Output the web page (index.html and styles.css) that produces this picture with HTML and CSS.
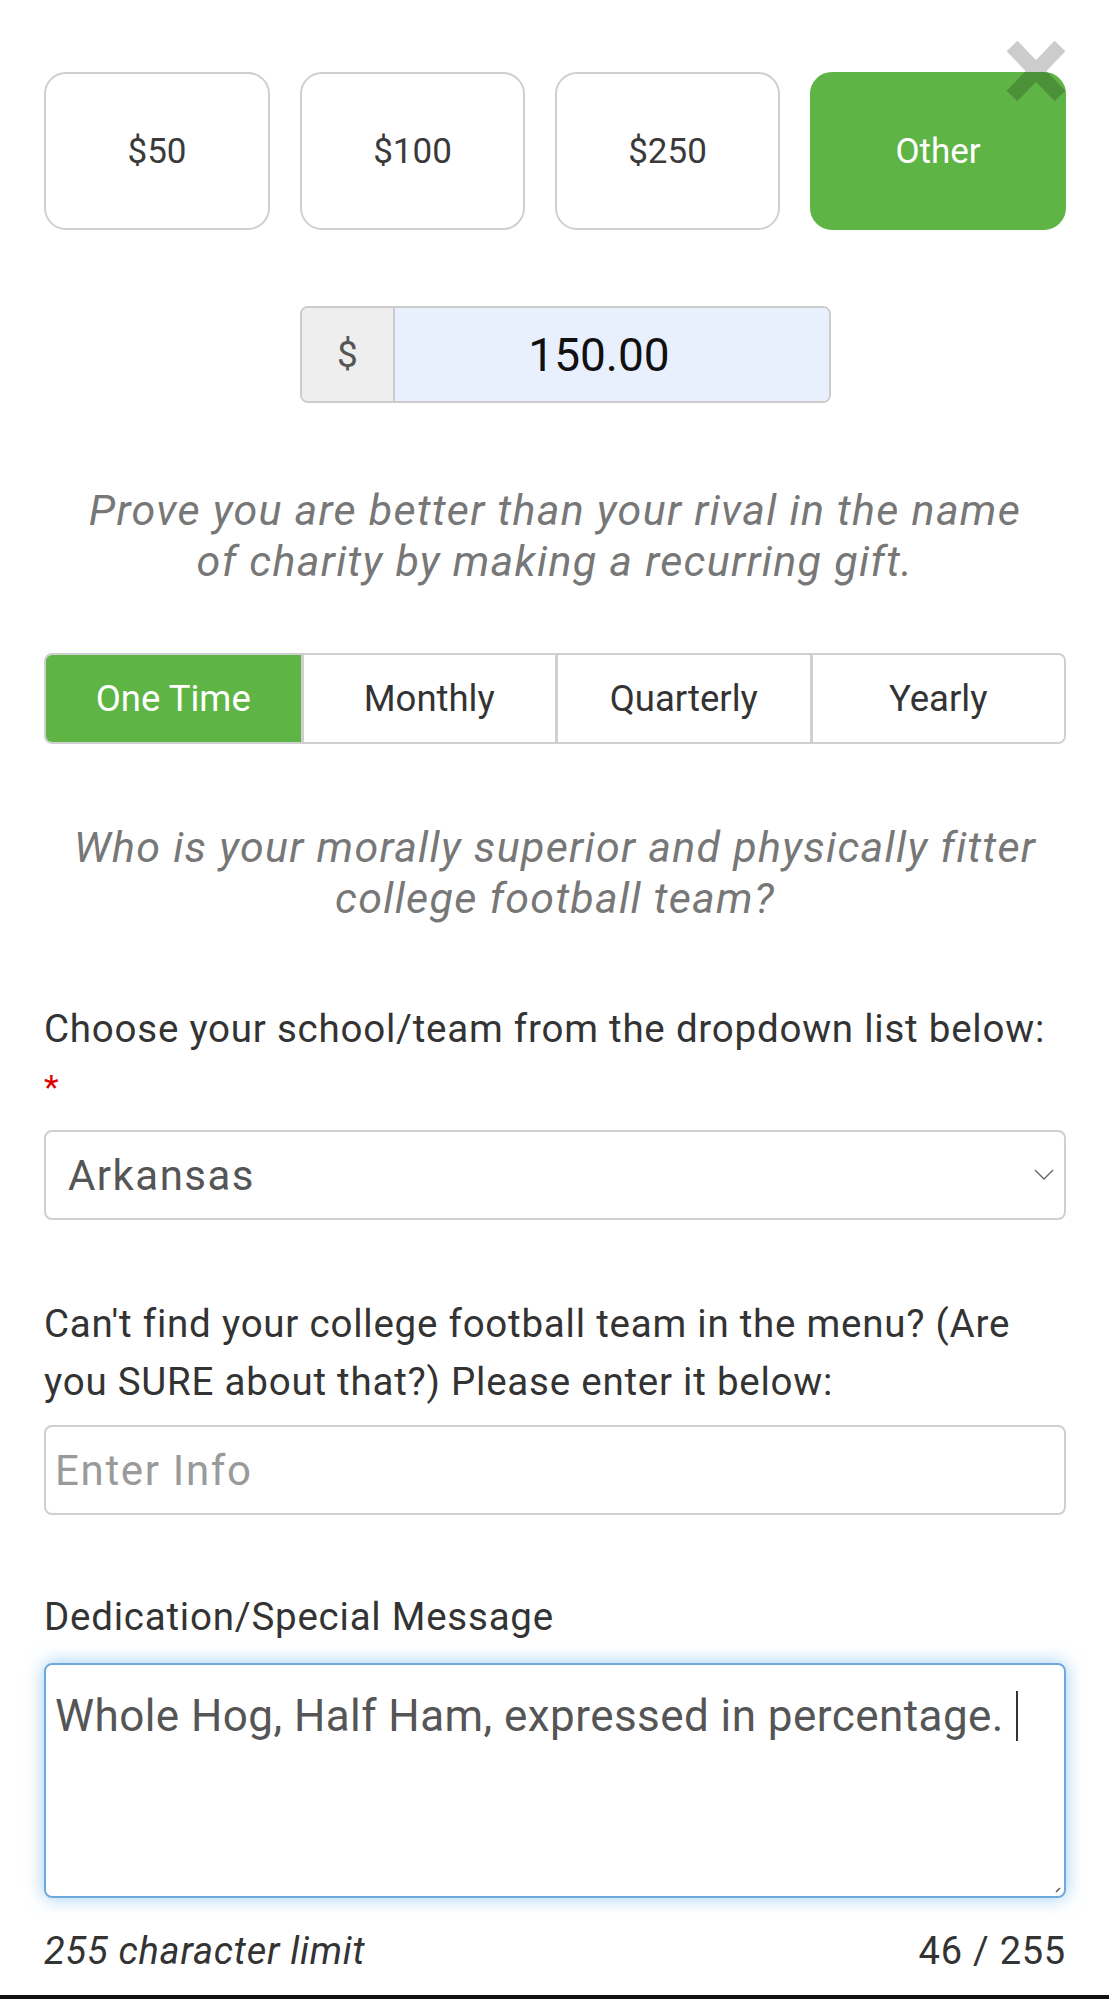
FILE: index.html
```html
<!DOCTYPE html>
<html lang="en">
<head>
<meta charset="utf-8">
<title>Donation form</title>
<link rel="stylesheet" href="styles.css">
</head>
<body>
<div class="page">
  <div class="form">
    <div class="amounts">
      <button class="amt">$50</button>
      <button class="amt">$100</button>
      <button class="amt">$250</button>
      <button class="amt amt-on">Other
        <svg class="close" viewBox="0 0 60 62" width="60" height="62"><path d="M6 6 L54 56 M54 6 L6 56" stroke="rgba(0,0,0,0.2)" stroke-width="15" fill="none"/></svg>
      </button>
    </div>

    <div class="money">
      <span class="addon">$</span>
      <span class="money-input">150.00</span>
    </div>

    <p class="pitch">Prove you are better than your rival in the name<br>of charity by making a recurring gift.</p>

    <div class="freq">
      <button class="fq fq-on">One Time</button>
      <button class="fq">Monthly</button>
      <button class="fq">Quarterly</button>
      <button class="fq">Yearly</button>
    </div>

    <p class="pitch pitch2">Who is your morally superior and physically fitter<br>college football team?</p>

    <label class="lbl">Choose your school/team from the dropdown list below: <span class="req">*</span></label>
    <div class="select">
      <span>Arkansas</span>
      <svg class="chev" viewBox="0 0 20 12" width="20" height="12"><path d="M1 1 L10 10 L19 1" stroke="#666" stroke-width="1.4" fill="none"/></svg>
    </div>

    <label class="lbl lbl2">Can't find your college football team in the menu? (Are<br>you SURE about that?) Please enter it below:</label>
    <div class="text-input placeholder">Enter Info</div>

    <label class="lbl lbl3">Dedication/Special Message</label>
    <div class="textarea">
      <span>Whole Hog, Half Ham, expressed in percentage.</span><span class="caret"></span>
      <svg class="grip" viewBox="0 0 6 6" width="6" height="6"><path d="M5 1 L1 5" stroke="#555" stroke-width="1.5"/></svg>
    </div>

    <div class="counter">
      <span class="limit">255 character limit</span>
      <span>46 / 255</span>
    </div>
  </div>
  <div class="bottombar"></div>
</div>
</body>
</html>
```

FILE: styles.css
```css
* { box-sizing: border-box; }
html, body { margin: 0; padding: 0; background: #fff; }
body { font-family: "Roboto", "Liberation Sans", sans-serif; color: #333; }
.page {
  min-height: 1999px;
  display: flex;
  flex-direction: column;
}
.form {
  padding: 72px 43px 0 44px;
  display: flex;
  flex-direction: column;
}
button { font-family: inherit; cursor: pointer; }

.amounts {
  display: grid;
  grid-template-columns: 226px 225px 225px 1fr;
  gap: 30px;
}
.amt {
  position: relative;
  height: 158px;
  border: 2px solid #cfcfcf;
  border-radius: 22px;
  background: #fff;
  font-size: 35px;
  color: #3a3a3a;
  padding: 0;
}
.amt-on {
  background: #5fb446;
  border-color: #5fb446;
  color: #fff;
}
.close {
  position: absolute;
  top: -34px;
  right: -2px;
}

.money {
  margin-top: 76px;
  margin-left: 256px;
  width: 531px;
  height: 97px;
  display: flex;
  border: 2px solid #cccccc;
  border-radius: 8px;
  overflow: hidden;
}
.addon {
  width: 93px;
  background: #eeeeee;
  border-right: 2px solid #cccccc;
  display: flex;
  align-items: center;
  justify-content: center;
  font-size: 37px;
  color: #555;
}
.money-input {
  flex: 1;
  background: #e8f0fe;
  display: flex;
  align-items: center;
  justify-content: center;
  padding-right: 26px;
  font-size: 46px;
  color: #111;
}

.pitch {
  margin: 82px 0 0;
  text-align: center;
  font-style: italic;
  font-size: 43px;
  letter-spacing: 0.03em;
  line-height: 51px;
  color: #777;
}
.pitch2 { margin-top: 78px; }

.freq {
  margin-top: 66px;
  display: grid;
  grid-template-columns: repeat(4, 1fr);
  height: 91px;
  border: 2px solid #cfcfcf;
  border-radius: 8px;
  overflow: hidden;
}
.fq {
  border: 0;
  border-left: 3px solid #cfcfcf;
  background: #fff;
  font-size: 36.5px;
  color: #333;
  padding: 0;
}
.fq:first-child { border-left: 0; }
.fq-on {
  background: #5fb446;
  color: #fff;
}

.lbl {
  display: block;
  margin-top: 76px;
  font-size: 38.5px;
  letter-spacing: 0.02em;
  line-height: 58px;
  color: #333;
}
.req { display: block; color: #e00000; font-size: 34px; }
.lbl2 { margin-top: 75px; }
.lbl3 { margin-top: 73px; }

.select {
  margin-top: 14px;
  height: 90px;
  border: 2px solid #cfcfcf;
  border-radius: 8px;
  display: flex;
  align-items: center;
  justify-content: space-between;
  padding: 0 10px 0 22px;
  font-size: 42px;
  letter-spacing: 0.035em;
  color: #555;
}

.text-input {
  margin-top: 14px;
  height: 90px;
  border: 2px solid #cfcfcf;
  border-radius: 8px;
  display: flex;
  align-items: center;
  padding: 0 9px;
  font-size: 42px;
  letter-spacing: 0.04em;
  color: #555;
}
.placeholder { color: #9a9a9a; }

.textarea {
  position: relative;
  margin-top: 17px;
  height: 235px;
  border: 2px solid #6fa9dc;
  border-radius: 8px;
  box-shadow: 0 0 18px rgba(102, 175, 233, 0.65);
  padding: 22px 9px;
  font-size: 44px;
  letter-spacing: 0.01em;
  line-height: 58px;
  color: #555;
}
.caret {
  display: inline-block;
  width: 2px;
  height: 50px;
  background: #333;
  margin-left: 12px;
  vertical-align: -10px;
}
.grip {
  position: absolute;
  right: 3px;
  bottom: 3px;
}

.counter {
  margin-top: 24px;
  display: flex;
  justify-content: space-between;
  font-size: 38px;
  letter-spacing: 0.02em;
  line-height: 58px;
  color: #333;
}
.limit { font-style: italic; }

.bottombar {
  margin-top: auto;
  height: 4px;
  background: #111;
}
```
